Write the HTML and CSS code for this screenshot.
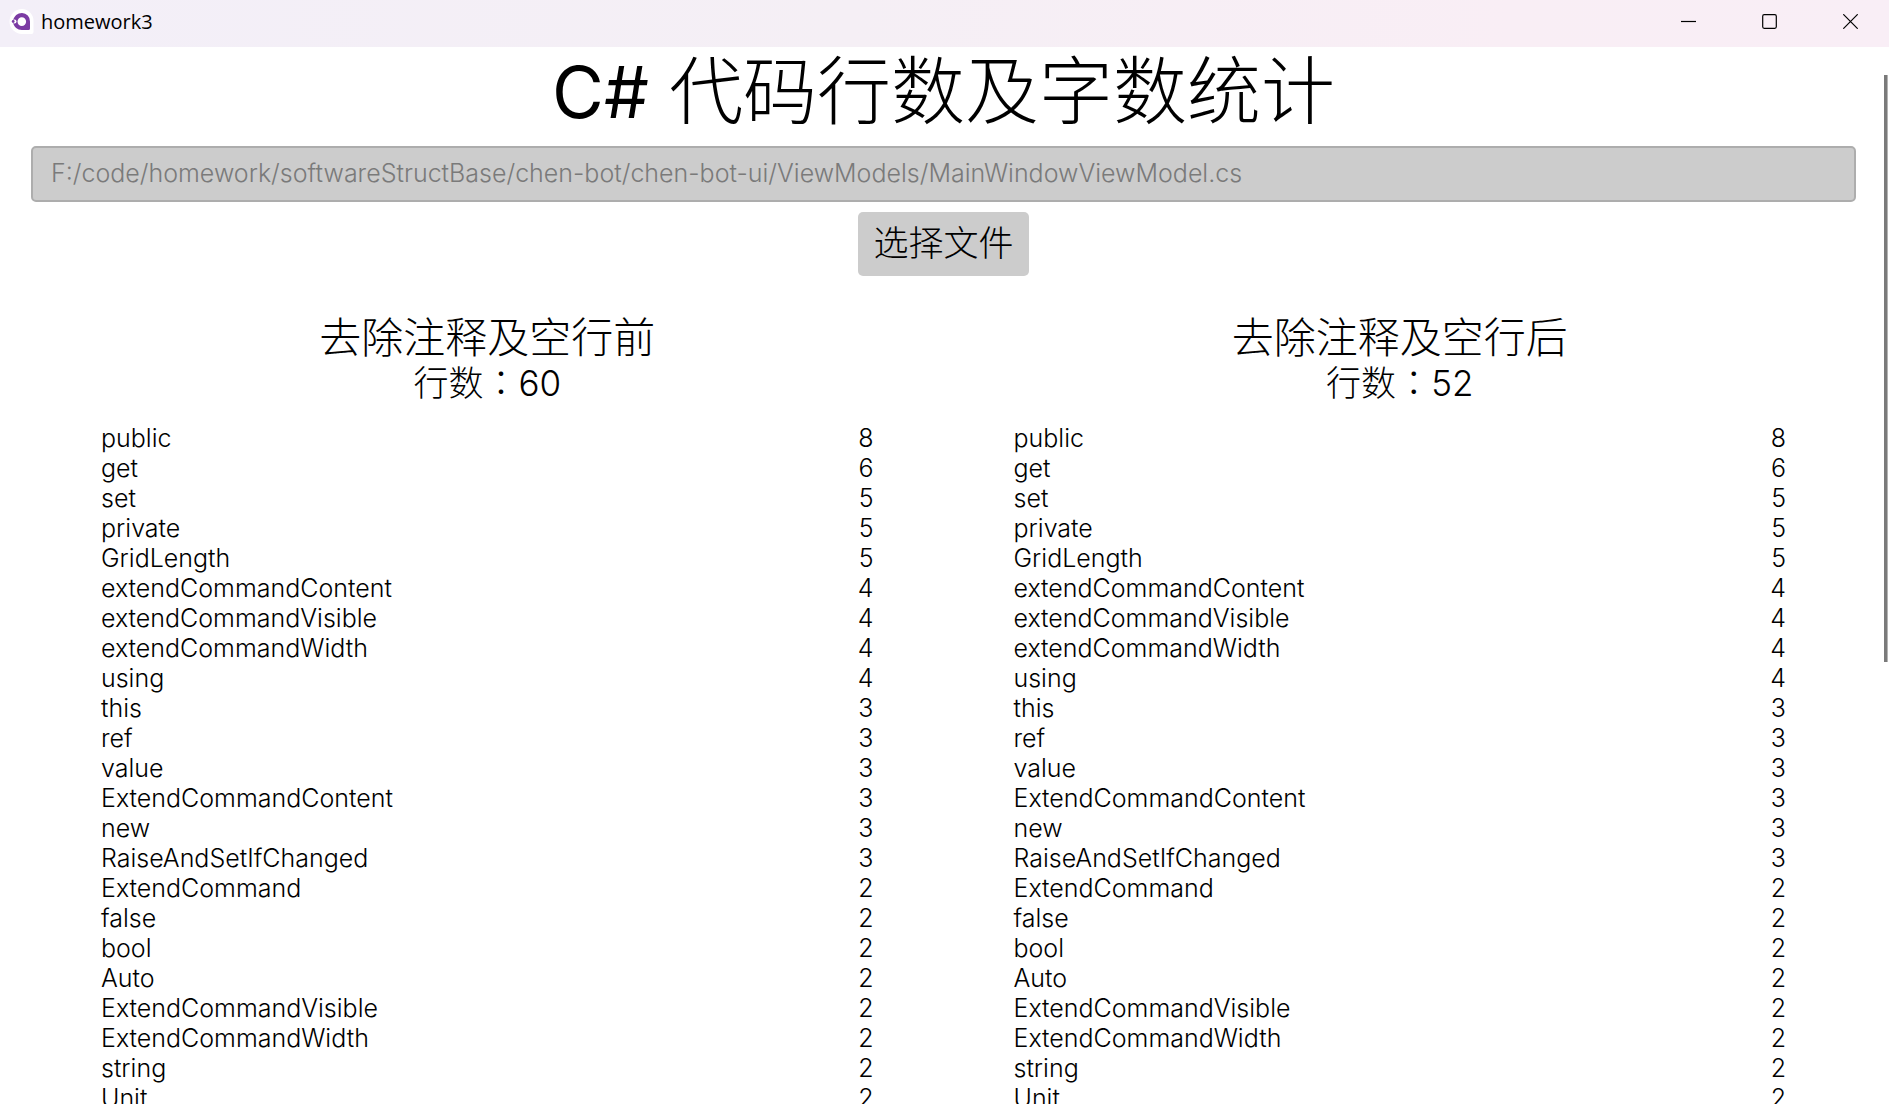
FILE: index.html
```html
<!DOCTYPE html>
<html lang="zh-CN">
<head>
<meta charset="utf-8">
<title>homework3</title>
<link rel="stylesheet" href="styles.css">
</head>
<body>
<div class="window">
  <header class="titlebar">
    <svg class="app-icon" viewBox="0 0 26 26" aria-hidden="true">
      <path d="M13 0a12.500 12.500 0 1 0 0 25h9.500a2 2 0 0 0 2-2V12.500A12 12 0 0 0 13 0z" fill="#fff"/>
      <path fill="#7b3ba3" fill-rule="evenodd" d="M13 4C8.500 4 5 7.200 4.200 11.200a2 2 0 0 1 0 2.800C5 18 8.500 21 12.800 21h6.700a1.500 1.500 0 0 0 1.500-1.500V12.500A8.200 8.200 0 0 0 13 4zm-.2 4.300a4.300 4.300 0 1 1 0 8.600 4.300 4.300 0 0 1 0-8.600z"/>
      <circle cx="5.500" cy="12.500" r="2" fill="#fff"/>
      <circle cx="4.200" cy="12.500" r="1.400" fill="#7b3ba3"/>
    </svg>
    <span class="app-name">homework3</span>
    <div class="caption-buttons">
      <button class="caption-button" type="button" aria-label="最小化"><svg viewBox="0 0 15 15"><path d="M0 7.500h15"/></svg></button>
      <button class="caption-button" type="button" aria-label="最大化"><svg viewBox="0 0 15 15"><rect x=".7" y=".7" width="13.600" height="13.600" rx="1.500"/></svg></button>
      <button class="caption-button" type="button" aria-label="关闭"><svg viewBox="0 0 15 15"><path d="M.3.3l14.400 14.400M14.700.3L.3 14.700"/></svg></button>
    </div>
  </header>
  <main class="content">
    <h1 class="title"><span class="latin">C# </span>代码行数及字数统计</h1>
    <input class="path" type="text" aria-label="文件路径" value="F:/code/homework/softwareStructBase/chen-bot/chen-bot-ui/ViewModels/MainWindowViewModel.cs" disabled>
    <button class="pick" type="button">选择文件</button>
    <div class="columns">
      <section class="column">
        <h2 class="heading">去除注释及空行前</h2>
        <p class="lines">行数<span class="colon" lang="zh-TW">：</span>60</p>
        <table class="words" aria-label="去除注释及空行前">
          <tbody>
            <tr><td>public</td><td>8</td></tr>
            <tr><td>get</td><td>6</td></tr>
            <tr><td>set</td><td>5</td></tr>
            <tr><td>private</td><td>5</td></tr>
            <tr><td>GridLength</td><td>5</td></tr>
            <tr><td>extendCommandContent</td><td>4</td></tr>
            <tr><td>extendCommandVisible</td><td>4</td></tr>
            <tr><td>extendCommandWidth</td><td>4</td></tr>
            <tr><td>using</td><td>4</td></tr>
            <tr><td>this</td><td>3</td></tr>
            <tr><td>ref</td><td>3</td></tr>
            <tr><td>value</td><td>3</td></tr>
            <tr><td>ExtendCommandContent</td><td>3</td></tr>
            <tr><td>new</td><td>3</td></tr>
            <tr><td>RaiseAndSetIfChanged</td><td>3</td></tr>
            <tr><td>ExtendCommand</td><td>2</td></tr>
            <tr><td>false</td><td>2</td></tr>
            <tr><td>bool</td><td>2</td></tr>
            <tr><td>Auto</td><td>2</td></tr>
            <tr><td>ExtendCommandVisible</td><td>2</td></tr>
            <tr><td>ExtendCommandWidth</td><td>2</td></tr>
            <tr><td>string</td><td>2</td></tr>
            <tr><td>Unit</td><td>2</td></tr>
          </tbody>
        </table>
      </section>
      <section class="column">
        <h2 class="heading">去除注释及空行后</h2>
        <p class="lines">行数<span class="colon" lang="zh-TW">：</span>52</p>
        <table class="words" aria-label="去除注释及空行后">
          <tbody>
            <tr><td>public</td><td>8</td></tr>
            <tr><td>get</td><td>6</td></tr>
            <tr><td>set</td><td>5</td></tr>
            <tr><td>private</td><td>5</td></tr>
            <tr><td>GridLength</td><td>5</td></tr>
            <tr><td>extendCommandContent</td><td>4</td></tr>
            <tr><td>extendCommandVisible</td><td>4</td></tr>
            <tr><td>extendCommandWidth</td><td>4</td></tr>
            <tr><td>using</td><td>4</td></tr>
            <tr><td>this</td><td>3</td></tr>
            <tr><td>ref</td><td>3</td></tr>
            <tr><td>value</td><td>3</td></tr>
            <tr><td>ExtendCommandContent</td><td>3</td></tr>
            <tr><td>new</td><td>3</td></tr>
            <tr><td>RaiseAndSetIfChanged</td><td>3</td></tr>
            <tr><td>ExtendCommand</td><td>2</td></tr>
            <tr><td>false</td><td>2</td></tr>
            <tr><td>bool</td><td>2</td></tr>
            <tr><td>Auto</td><td>2</td></tr>
            <tr><td>ExtendCommandVisible</td><td>2</td></tr>
            <tr><td>ExtendCommandWidth</td><td>2</td></tr>
            <tr><td>string</td><td>2</td></tr>
            <tr><td>Unit</td><td>2</td></tr>
          </tbody>
        </table>
      </section>
    </div>
    <div class="scroll-thumb"></div>
  </main>
</div>
</body>
</html>
```
FILE: styles.css
```css
* { box-sizing: border-box; }

body {
  margin: 0;
  background: #fff;
  color: #000;
  font-family: Inter, "Noto Sans CJK SC", sans-serif;
  font-size: 25px;
  font-weight: 300;
}

.window {
  display: flex;
  flex-direction: column;
  height: 100vh;
  overflow: hidden;
}

.titlebar {
  display: flex;
  flex: none;
  align-items: center;
  height: 47px;
  padding: 0 0 4px 9px;
  background: linear-gradient(90deg, #f3eff8, #f5eff5 45%, #f9eef5 80%, #f9eef6);
}

.app-icon { width: 26px; height: 26px; }

.app-name {
  margin-left: 6px;
  font-family: "Open Sans", sans-serif;
  font-size: 20px;
  font-weight: 400;
}

.caption-buttons { display: flex; margin-left: auto; }

.caption-button {
  display: grid;
  place-items: center;
  width: 81px;
  height: 43px;
  padding: 0 0 0 4px;
  border: 0;
  background: none;
}

.caption-button svg {
  width: 15px;
  height: 15px;
  fill: none;
  stroke: #000;
  stroke-width: 1.2;
}

.content {
  position: relative;
  display: flex;
  flex: 1;
  flex-direction: column;
  align-items: center;
  min-height: 0;
  padding: 0 33px 0 31px;
  overflow: hidden;
}

.title {
  flex: none;
  margin: 0;
  font-size: 74px;
  font-weight: 300;
  line-height: 88px;
}

.latin {
  font-size: 71px;
  font-weight: 400;
  font-optical-sizing: none;
}

.path {
  flex: none;
  width: 100%;
  height: 56px;
  margin-top: 10px;
  padding: 0 18px 3px;
  border: 2px solid #adadad;
  border-radius: 5px;
  background: #ccc;
  color: #7a7a7a;
  font: inherit;
}

.pick {
  flex: none;
  height: 64px;
  margin-top: 10px;
  padding: 0 15px 8px;
  border: 0;
  border-radius: 5px;
  background: #ccc;
  color: #000;
  font: inherit;
  font-size: 35px;
}

.columns {
  display: grid;
  flex: none;
  grid-template-columns: 1fr 1fr;
  width: 100%;
  margin-top: 37px;
}

.column { padding: 0 70px; }

.heading {
  margin: 0;
  font-size: 42px;
  font-weight: 300;
  line-height: 50px;
  text-align: center;
}

.lines {
  margin: 0;
  font-size: 35px;
  line-height: 40px;
  text-align: center;
}

.colon {
  font-family: "Noto Sans CJK TC", sans-serif;
  line-height: 1;
}

.words {
  width: 100%;
  margin-top: 20px;
  border-collapse: collapse;
  line-height: 30px;
}

.words td { padding: 0; }
.words td:last-child { text-align: right; }

.scroll-thumb {
  position: absolute;
  top: 28px;
  right: 1px;
  width: 4px;
  height: 587px;
  border-right: 1px solid #b4b4b4;
  background: #7a7a7a;
}
```
